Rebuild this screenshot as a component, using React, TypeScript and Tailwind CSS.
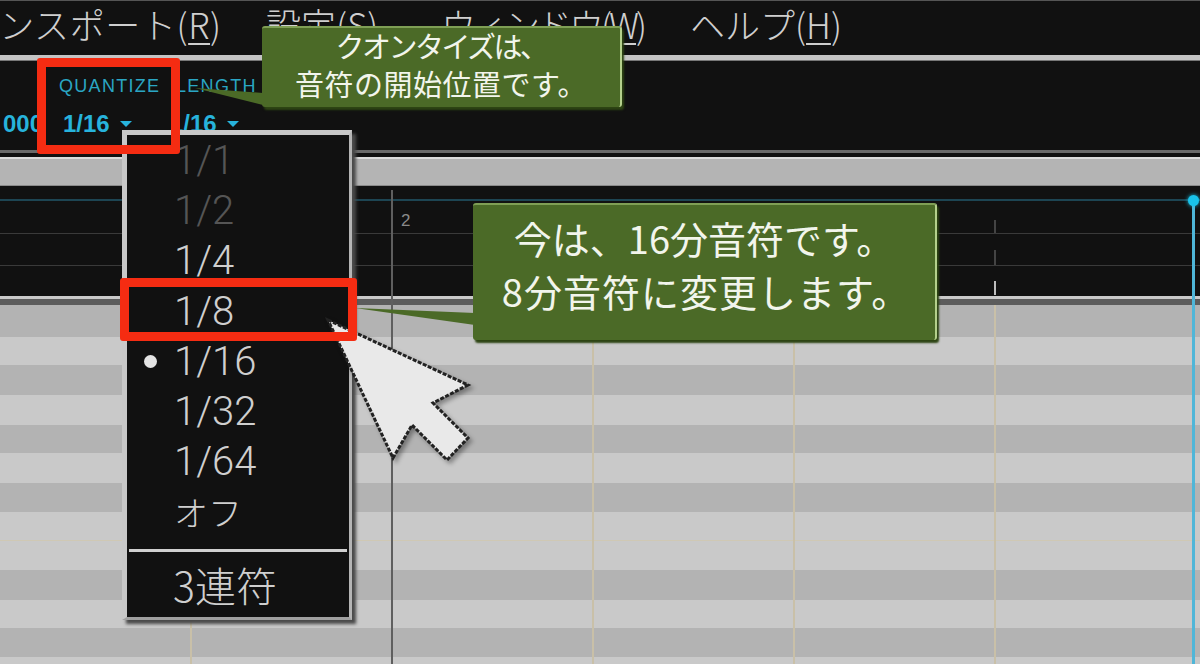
import React from 'react';

const cjk = "font-['Noto_Sans_CJK_JP',sans-serif]";

const pianoRows = [
  { h: 'h-[32px]', dark: true },
  { h: 'h-[28px]', dark: false },
  { h: 'h-[30px]', dark: true },
  { h: 'h-[30px]', dark: false },
  { h: 'h-[28px]', dark: true },
  { h: 'h-[30px]', dark: false },
  { h: 'h-[29px]', dark: true },
  { h: 'h-[29px]', dark: false, line: true },
  { h: 'h-[29px]', dark: false },
  { h: 'h-[30px]', dark: true },
  { h: 'h-[28px]', dark: false },
  { h: 'h-[29px]', dark: true },
  { h: 'h-[29px]', dark: false },
];

const menuItems = [
  { label: 'トランスポート(', key: 'R', cls: 'ml-[-72px] w-[338px] tracking-[0.6px]' },
  { label: '設定(', key: 'S', cls: 'w-[175px]' },
  { label: 'ウィンドウ(', key: 'W', cls: 'w-[249px] tracking-[-3px]' },
  { label: 'ヘルプ(', key: 'H', cls: '' },
];

const quantizeItems = [
  { label: '1/1', muted: true },
  { label: '1/2', muted: true },
  { label: '1/4' },
  { label: '1/8' },
  { label: '1/16', checked: true },
  { label: '1/32' },
  { label: '1/64' },
  { label: 'オフ' },
];

const Caret = () => (
  <span className="w-0 h-0 border-x-[6px] border-x-transparent border-t-[6px] border-t-[#27b3dc]" />
);

const Callout = ({ className, lines }: { className: string; lines: { text: string; cls?: string }[] }) => (
  <div
    className={`absolute z-30 flex flex-col items-center justify-center bg-[#4b6a27] border-t-2 border-r-2 border-t-[#7f9f55] border-r-[#b4d08c] rounded-[3px] shadow-[2px_3px_2px_#2d4413] text-[#f2f5ec] ${cjk} ${className}`}
  >
    {lines.map((line) => (
      <div key={line.text} className={line.cls}>
        {line.text}
      </div>
    ))}
  </div>
);

export default function App() {
  return (
    <div className="relative w-[1200px] h-[664px] overflow-hidden bg-[#111111]">
      {/* menu bar */}
      <div className="h-[55px] pb-[7px] border-t border-t-[#555] flex items-center overflow-hidden">
        {menuItems.map((m) => (
          <div
            key={m.key}
            className={`shrink-0 whitespace-nowrap text-[35px] font-light text-[#cfcfcf] ${cjk} ${m.cls}`}
          >
            {m.label}
            <span className="underline underline-offset-4 decoration-2">{m.key}</span>)
          </div>
        ))}
      </div>
      <div className="h-[6px] bg-[#c4c4c4] border-b border-b-[#777]" />

      {/* toolbar */}
      <div className="h-[89px] flex text-[#27b3dc] font-['Liberation_Sans',sans-serif]">
        <div className="w-[59px] pt-[46px] pl-[3px] text-[24px] font-bold leading-[34px] overflow-hidden">000</div>
        <div className="w-[117px] flex flex-col pt-[15px]">
          <div className="text-[18px] leading-5 tracking-[1.3px] text-[#2aa6c4]">QUANTIZE</div>
          <div className="flex items-center gap-[10px] pl-1 mt-[11px] text-[24px] font-bold leading-[34px]">
            1/16 <Caret />
          </div>
        </div>
        <div className="flex flex-col pt-[15px]">
          <div className="text-[18px] leading-5 tracking-[1.3px] text-[#2aa6c4]">LENGTH</div>
          <div className="flex items-center gap-[10px] ml-[-6px] mt-[11px] text-[24px] font-bold leading-[34px]">
            1/16 <Caret />
          </div>
        </div>
      </div>
      <div className="h-[3px] bg-[#6a6a6a]" />
      <div className="h-[4px] bg-[#111111]" />

      {/* grey band */}
      <div className="h-[29px] bg-[#b4b4b4] border-t-2 border-t-[#dcdcdc] border-b border-b-[#8a8a8a]" />

      {/* ruler */}
      <div className="relative h-[110px] bg-[#111111] pt-[13px] flex flex-col">
        <div className="h-[2px] bg-[#1d4553]" />
        <div className="h-px mt-[32px] bg-[#3a3a3a]" />
        <div className="h-px mt-[31px] bg-[#3a3a3a]" />
        <div className="absolute inset-0 flex pl-[401px] pt-[25px]">
          <span className="text-[17px] leading-5 text-[#8a8a8a] font-['Liberation_Sans',sans-serif]">2</span>
        </div>
        <div className="absolute inset-0 flex pl-[592px]">
          {[0, 1, 2].map((i) => (
            <div key={i} className="w-[201px] flex flex-col pt-[34px]">
              <div className="h-[13px] w-[2px] bg-[#444]" />
              <div className="h-[15px] w-[2px] mt-[17px] bg-[#444]" />
              <div className="h-[14px] w-[2px] mt-[16px] bg-[#bdbdbd]" />
            </div>
          ))}
        </div>
      </div>

      {/* separator */}
      <div className="h-[3px] bg-[#c9c9c9]" />
      <div className="h-[6px] bg-[#5c5c5c]" />

      {/* piano roll */}
      <div className="relative">
        {pianoRows.map((row, i) => (
          <div
            key={i}
            className={`${row.h} ${row.dark ? 'bg-[#b3b3b3]' : 'bg-[#c9c9c9]'} ${row.line ? 'border-b border-b-[#cfc8b4]' : ''}`}
          />
        ))}
        <div className="absolute inset-0 flex pl-[190px]">
          {[0, 1, 2, 3, 4].map((i) => (
            <div key={i} className="w-[201px] border-l-2 border-l-[#c9c0a8]" />
          ))}
        </div>
      </div>

      {/* bar line and playhead across ruler + roll */}
      <div className="absolute z-10 left-[391px] top-[190px] bottom-0 w-[2px] bg-[#5f5f5f]" />
      <div className="absolute z-10 left-[1192px] top-[200px] bottom-0 w-[3px] bg-[#4fb6d8]" />
      <div className="absolute z-10 left-[1188px] top-[195px] w-[11px] h-[11px] rounded-full bg-[#19c3ea] shadow-[0_0_4px_#19c3ea]" />

      {/* quantize menu */}
      <div className="absolute z-20 left-[122px] top-[130px] w-[230px] h-[490px] flex flex-col bg-[#111111] border-t-[5px] border-l-[5px] border-r-[3px] border-b-[3px] border-t-[#c8c8c8] border-l-[#c8c8c8] border-r-[#b5b5b5] border-b-[#a0a0a0] shadow-[4px_4px_3px_#4a4a4a]">
        <div className="flex flex-col pt-[1px]">
          {quantizeItems.map((item) => (
            <div
              key={item.label}
              className={`relative h-[50.2px] flex items-center pl-[47px] font-light leading-none ${item.muted ? 'text-[#555555]' : 'text-[#cfcfcf]'} ${item.label === 'オフ' ? `text-[34px] ${cjk}` : "text-[40px] font-['Roboto',sans-serif]"}`}
            >
              {item.checked && <span className="absolute left-[17px] w-[13px] h-[13px] rounded-full bg-[#e4e4e4]" />}
              {item.label}
            </div>
          ))}
        </div>
        <div className="h-[3px] mt-[11px] mx-[2px] bg-[#d0d0d0]" />
        <div className={`pl-[46px] mt-[8px] text-[41px] font-light leading-[48px] text-[#cfcfcf] ${cjk}`}>3連符</div>
      </div>

      {/* pointer */}
      <svg className="absolute z-20 left-[320px] top-[312px] drop-shadow-[3px_3px_2px_rgba(0,0,0,0.35)]" width="160" height="156" viewBox="320 312 160 156">
        <polygon
          points="328,320 468,385 433,403 468,438 447,460 412,425 393,458"
          fill="#e9e9e9"
          stroke="#222"
          strokeWidth="3"
          strokeDasharray="4 1.5"
        />
      </svg>

      {/* callout tails */}
      <svg className="absolute z-30 left-[195px] top-[85px]" width="70" height="24" viewBox="0 0 70 24">
        <polygon points="0,3 68,8 68,20" fill="#4b6a27" />
      </svg>
      <svg className="absolute z-30 left-[355px] top-[305px]" width="122" height="24" viewBox="0 0 122 24">
        <polygon points="0,3 120,8 120,20" fill="#4b6a27" />
      </svg>

      <Callout
        className="left-[262px] top-[26px] w-[360px] h-[81px] text-[29px] leading-[38px] pb-[8px]"
        lines={[{ text: 'クオンタイズは、', cls: 'tracking-[-2.5px]' }, { text: '音符の開始位置です。', cls: 'tracking-[0.5px]' }]}
      />
      <Callout
        className="left-[473px] top-[203px] w-[464px] h-[137px] text-[38px] leading-[53px] pb-[18px]"
        lines={[{ text: '今は、16分音符です。' }, { text: '8分音符に変更します。', cls: 'tracking-[1px] pl-[4px]' }]}
      />

      {/* red highlights */}
      <div className="absolute z-40 left-[37px] top-[58px] w-[143px] h-[96px] border-[9px] border-[#f52c12] rounded-[3px]" />
      <div className="absolute z-40 left-[120px] top-[278px] w-[237px] h-[63px] border-[9px] border-[#f52c12] rounded-[3px]" />
    </div>
  );
}
